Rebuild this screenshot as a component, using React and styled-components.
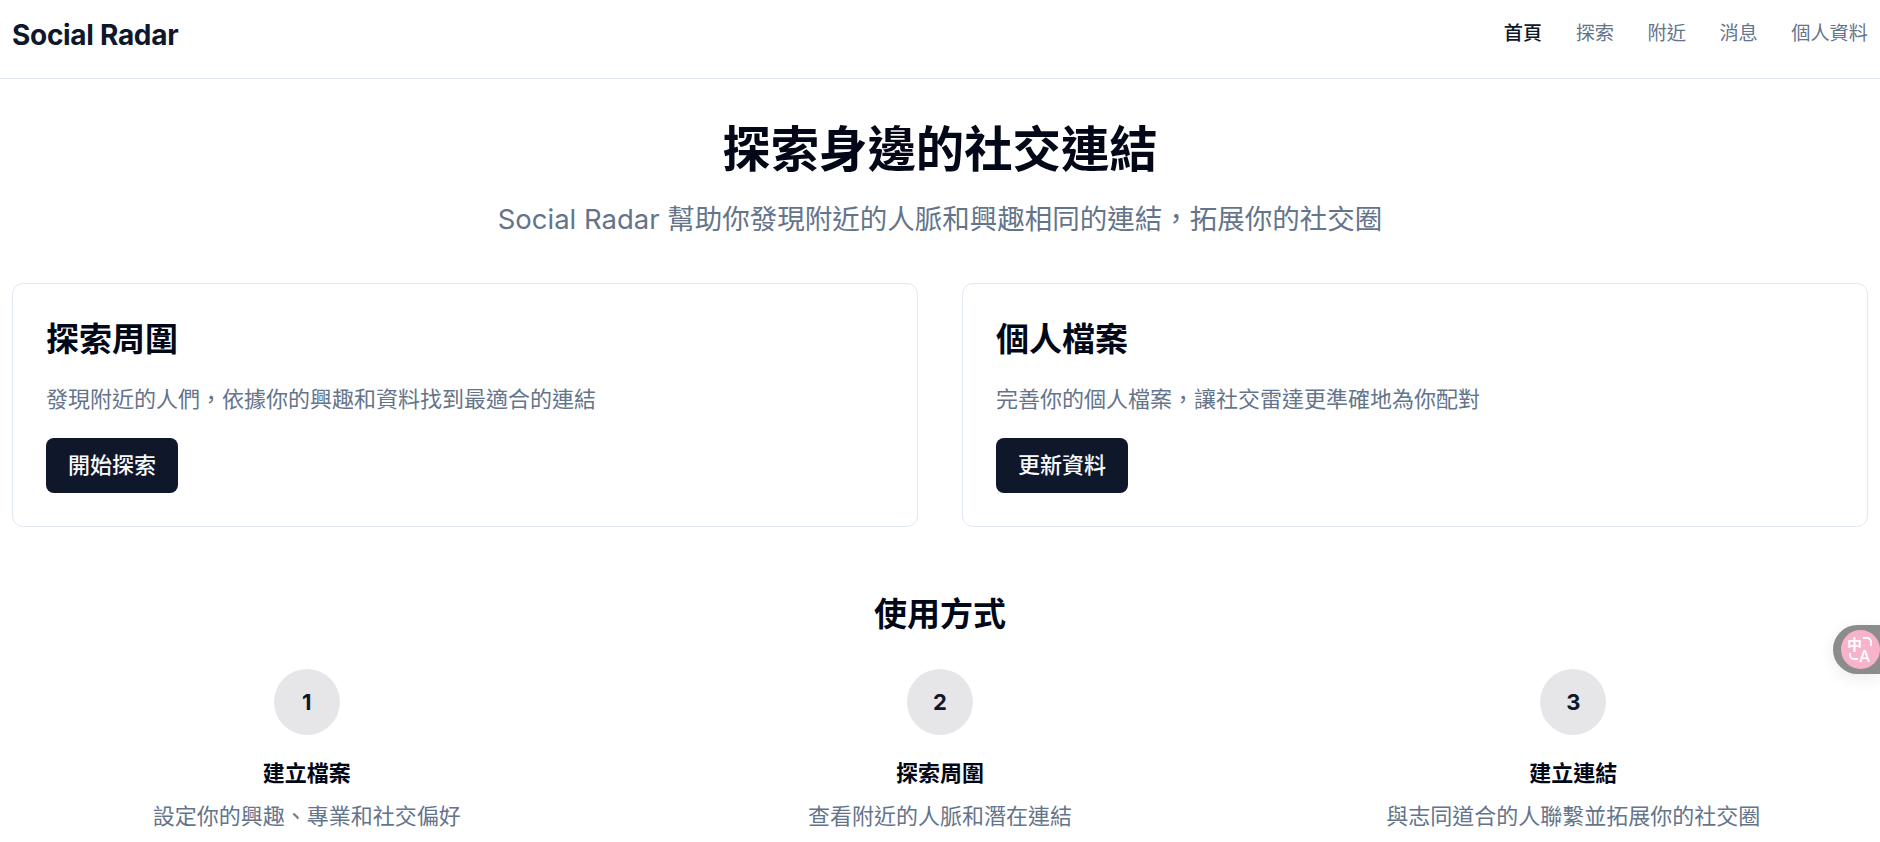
import React from "react";
import styled, { createGlobalStyle } from "styled-components";

const GlobalStyle = createGlobalStyle`
  html, body {
    margin: 0;
    padding: 0;
    background: #fff;
    overflow: hidden;
    font-family: Inter, "Noto Sans CJK TC", sans-serif;
    color: #020817;
  }
  * { box-sizing: border-box; }
`;

const Page = styled.div`
  height: 842px;
  overflow: hidden;
  position: relative;
`;

const Header = styled.header`
  height: 79px;
  display: flex;
  align-items: flex-start;
  justify-content: space-between;
  padding: 17px 12px 0;
  border-bottom: 1px solid #e2e8f0;
`;

const Logo = styled.div`
  font-size: 28px;
  line-height: 36px;
  font-weight: 700;
  color: #0f172a;
  letter-spacing: -0.3px;
`;

const Nav = styled.nav`
  display: flex;
  gap: 33.5px;
  padding-top: 2px;
`;

const NavLink = styled.a`
  font-size: 19.2px;
  line-height: 28px;
  font-weight: ${(p) => (p.$active ? 500 : 400)};
  color: ${(p) => (p.$active ? "#0f172a" : "#64748b")};
`;

const Main = styled.main`
  padding: 0 12px;
`;

const Hero = styled.section`
  text-align: center;
  padding-top: 41px;
`;

const Title = styled.h1`
  margin: 0;
  font-size: 48.4px;
  line-height: 60px;
  font-weight: 700;
`;

const Subtitle = styled.p`
  margin: 19px 0 0;
  font-size: 27.5px;
  line-height: 40px;
  color: #64748b;
`;

const CardGrid = styled.section`
  display: grid;
  grid-template-columns: 1fr 1fr;
  gap: 44px;
  margin-top: 44px;
`;

const Card = styled.div`
  padding: 33px;
  border: 1px solid #e2e8f0;
  border-radius: 11px;
`;

const CardTitle = styled.h2`
  margin: 0;
  font-size: 33px;
  line-height: 44px;
  font-weight: 700;
`;

const CardText = styled.p`
  margin: 22px 0 0;
  font-size: 22px;
  line-height: 33px;
  color: #64748b;
`;

const Button = styled.button`
  display: block;
  margin-top: 22px;
  height: 55px;
  padding: 0 22px 5px;
  border: none;
  border-radius: 8px;
  background: #0f172a;
  color: #f8fafc;
  font-family: inherit;
  font-size: 22px;
  font-weight: 500;
`;

const HowTo = styled.section`
  margin-top: 65px;
`;

const HowTitle = styled.h2`
  margin: 0;
  text-align: center;
  font-size: 33px;
  line-height: 44px;
  font-weight: 700;
`;

const Steps = styled.div`
  display: grid;
  grid-template-columns: repeat(3, 1fr);
  gap: 44px;
  margin-top: 33px;
`;

const Step = styled.div`
  display: flex;
  flex-direction: column;
  align-items: center;
`;

const StepNumber = styled.div`
  width: 66px;
  height: 66px;
  border-radius: 50%;
  background: #e6e6e9;
  display: flex;
  align-items: center;
  justify-content: center;
  font-size: 22px;
  font-weight: 700;
  color: #0f172a;
`;

const StepTitle = styled.h3`
  margin: 22px 0 0;
  font-size: 22px;
  line-height: 33px;
  font-weight: 700;
`;

const StepText = styled.p`
  margin: 10px 0 0;
  font-size: 22px;
  line-height: 33px;
  color: #64748b;
`;

// floating translate widget sitting over the page
const Widget = styled.div`
  position: absolute;
  right: 0;
  top: 625px;
  width: 47px;
  height: 49px;
  padding: 5px 0 0 8px;
  background: #8c8c8c;
  border-radius: 25px 0 0 25px;
  box-shadow: 0 4px 16px rgba(0, 0, 0, 0.08);
`;

const WidgetBadge = styled.div`
  position: relative;
  width: 39px;
  height: 39px;
  border-radius: 50%;
  background: #f7b3c9;
  color: #fff;
`;

const WidgetZh = styled.span`
  position: absolute;
  left: 6px;
  top: 6px;
  font-size: 15px;
  line-height: 17px;
  font-weight: 700;
`;

const WidgetEn = styled.span`
  position: absolute;
  left: 18px;
  top: 18px;
  font-size: 16px;
  line-height: 17px;
  font-weight: 500;
`;

const WidgetMarks = styled.svg`
  position: absolute;
  inset: 0;
`;

const navItems = ["首頁", "探索", "附近", "消息", "個人資料"];

const cards = [
  { title: "探索周圍", text: "發現附近的人們，依據你的興趣和資料找到最適合的連結", action: "開始探索" },
  { title: "個人檔案", text: "完善你的個人檔案，讓社交雷達更準確地為你配對", action: "更新資料" },
];

const steps = [
  { title: "建立檔案", text: "設定你的興趣、專業和社交偏好" },
  { title: "探索周圍", text: "查看附近的人脈和潛在連結" },
  { title: "建立連結", text: "與志同道合的人聯繫並拓展你的社交圈" },
];

const App = () => {
  return (
    <Page>
      <GlobalStyle />
      <Header>
        <Logo>Social Radar</Logo>
        <Nav>
          {navItems.map((item, i) => (
            <NavLink key={item} $active={i === 0}>
              {item}
            </NavLink>
          ))}
        </Nav>
      </Header>
      <Main>
        <Hero>
          <Title>探索身邊的社交連結</Title>
          <Subtitle>Social Radar 幫助你發現附近的人脈和興趣相同的連結，拓展你的社交圈</Subtitle>
        </Hero>
        <CardGrid>
          {cards.map((card) => (
            <Card key={card.title}>
              <CardTitle>{card.title}</CardTitle>
              <CardText>{card.text}</CardText>
              <Button>{card.action}</Button>
            </Card>
          ))}
        </CardGrid>
        <HowTo>
          <HowTitle>使用方式</HowTitle>
          <Steps>
            {steps.map((step, i) => (
              <Step key={step.title}>
                <StepNumber>{i + 1}</StepNumber>
                <StepTitle>{step.title}</StepTitle>
                <StepText>{step.text}</StepText>
              </Step>
            ))}
          </Steps>
        </HowTo>
      </Main>
      <Widget>
        <WidgetBadge>
          <WidgetZh>中</WidgetZh>
          <WidgetEn>A</WidgetEn>
          <WidgetMarks width="39" height="39" viewBox="0 0 39 39" fill="none" stroke="#fff" strokeWidth="1.8">
            <path d="M22 8h4a4 4 0 0 1 4 4v4" />
            <path d="M9 23v2a4 4 0 0 0 4 4h4" />
          </WidgetMarks>
        </WidgetBadge>
      </Widget>
    </Page>
  );
};

export default App;
